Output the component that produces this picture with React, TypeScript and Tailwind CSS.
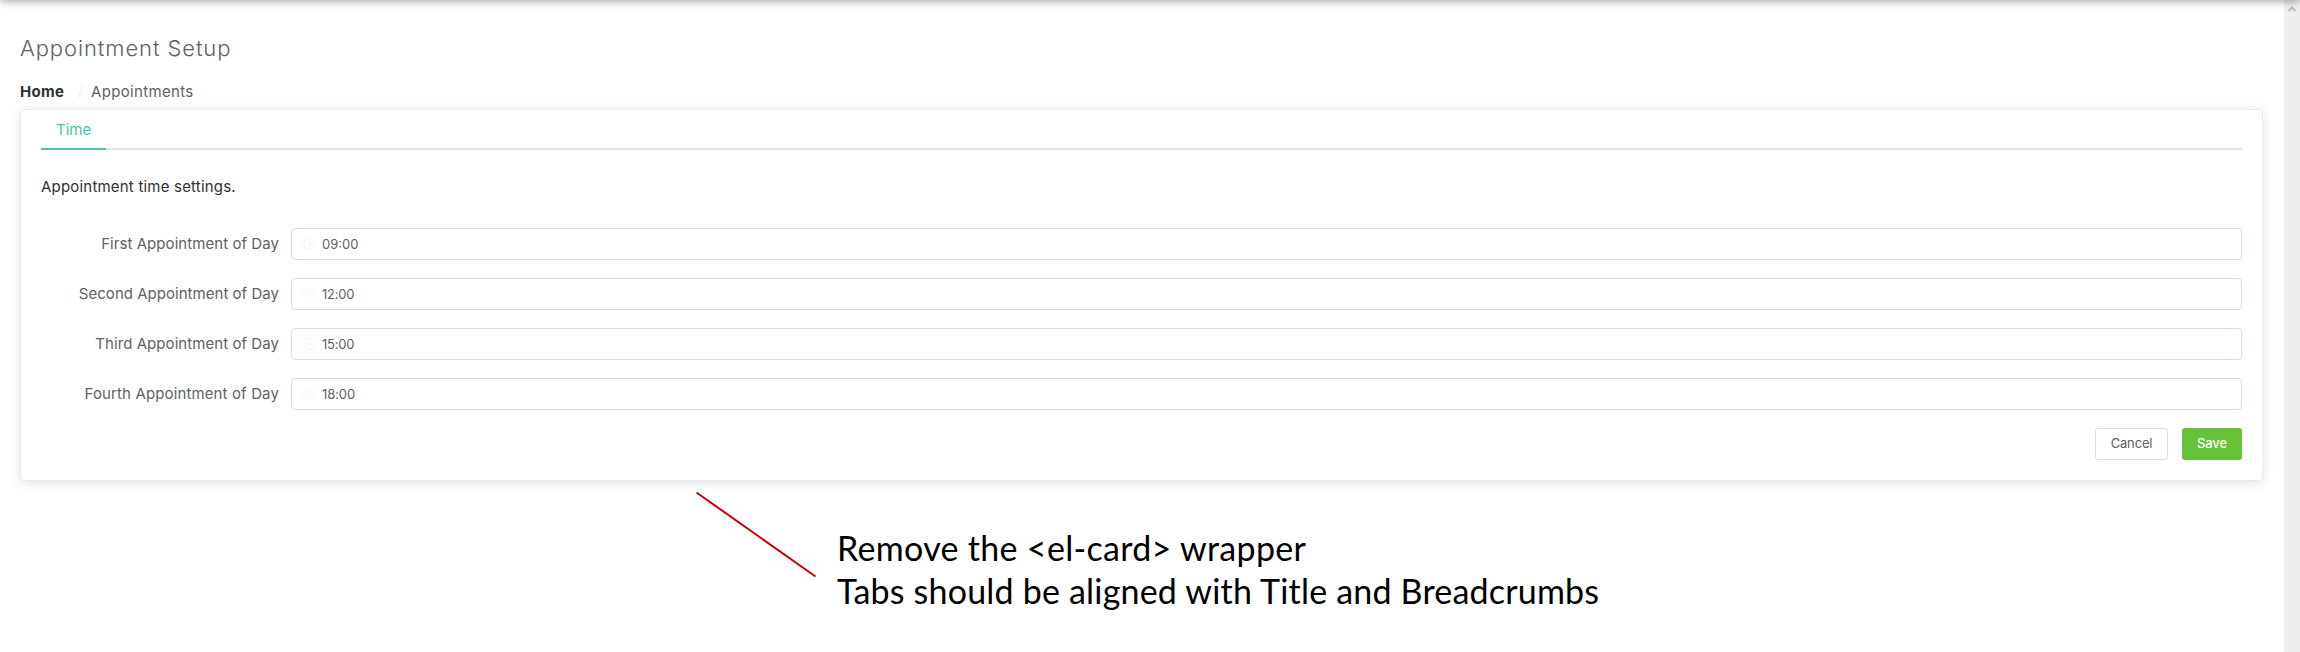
import { Fragment } from "react";

const fields = [
  { label: "First Appointment of Day", value: "09:00", track: "tracking-[0.06px]", valueTrack: "tracking-[0px]" },
  { label: "Second Appointment of Day", value: "12:00", track: "tracking-[0.03px]", valueTrack: "tracking-[-0.2px]" },
  { label: "Third Appointment of Day", value: "15:00", track: "tracking-[0.06px]", valueTrack: "tracking-[-0.2px]" },
  { label: "Fourth Appointment of Day", value: "18:00", track: "tracking-[0.13px]", valueTrack: "tracking-[-0.1px]" },
];

function ClockIcon() {
  return (
    <svg className="h-3 w-3 shrink-0" viewBox="0 0 12 12" fill="none" stroke="#eff3fb" strokeWidth="1">
      <circle cx="6" cy="6" r="5.3" />
      <path d="M6 2.8v3.7h3" />
    </svg>
  );
}

function Scrollbar() {
  return (
    <div className="flex w-4 shrink-0 justify-center bg-[#efefef] pt-[6px]">
      <svg className="mr-px h-[7px] w-[8px]" viewBox="0 0 8 7" fill="none" stroke="#bcbcbc" strokeWidth="2">
        <path d="M0.5 5L4 1.5L7.5 5" />
      </svg>
    </div>
  );
}

export default function App() {
  return (
    <div className="relative flex h-[652px] w-[2300px] overflow-hidden bg-white font-['Inter',sans-serif] text-[15px] text-[#606266]">
      <div className="pointer-events-none absolute inset-x-0 -top-2.5 h-2.5 shadow-[0_1px_8px_rgba(0,0,0,0.4)]" />

      <main className="flex-1 pl-5 pr-[21px] pt-8">
        <h1 className="h-8 text-[22px] font-light leading-8 tracking-[0.9px]">Appointment Setup</h1>

        <nav className="mt-[18px] flex h-5 items-center leading-5">
          <span className="w-[57px] font-bold tracking-[0.3px] text-[#303133]">Home</span>
          <svg className="h-3.5 w-[7px]" viewBox="0 0 7 14" stroke="#eff2f9" strokeWidth="1.5">
            <path d="M6 0L1 13.5" />
          </svg>
          <span className="ml-[7px] tracking-[0.33px]">Appointments</span>
        </nav>

        <section className="mt-[7px] h-[372px] rounded-[4px] border border-[#e6eaf5] bg-white px-5 shadow-[0_2px_12px_rgba(0,0,0,0.1)]">
          <div className="flex h-10 border-b-2 border-[#dfe3ec]">
            <div className="h-10 w-[65px] border-b-2 border-[#4fc0ab] pl-[15px] leading-10 text-[#52c1ad]">Time</div>
          </div>

          <p className="mt-[27px] h-5 leading-5 tracking-[0.2px] text-[#303133]">Appointment time settings.</p>

          <div className="mt-[31px] grid grid-cols-[238px_1fr] gap-x-3 gap-y-[18px]">
            {fields.map((f) => (
              <Fragment key={f.label}>
                <label className={"h-8 whitespace-nowrap text-right leading-[31px] " + f.track}>{f.label}</label>
                <div className="flex h-8 items-center rounded-[4px] border border-[#d8dce6] pl-[11px]">
                  <ClockIcon />
                  <span className={"ml-[7px] text-[13px] leading-[30px] " + f.valueTrack}>{f.value}</span>
                </div>
              </Fragment>
            ))}
          </div>

          <div className="mt-[18px] flex justify-end gap-[14px] text-[13px] tracking-[-0.15px]">
            <button className="h-8 w-[73px] rounded-[3px] border border-[#d8dce6] bg-white">Cancel</button>
            <button className="h-8 w-[60px] rounded-[3px] bg-[#67c23a] font-medium text-white">Save</button>
          </div>
        </section>
      </main>

      <Scrollbar />

      <svg className="absolute left-[690px] top-[486px] h-[96px] w-[132px]" viewBox="0 0 132 96" stroke="#cc0000" strokeWidth="2">
        <path d="M6.5 6.5L125.5 90.5" />
      </svg>
      <div className="absolute left-[837px] top-[526px] whitespace-nowrap font-['Lato',sans-serif] text-[34px] leading-[43px] text-black">
        <p className="tracking-[0.31px]">Remove the &lt;el-card&gt; wrapper</p>
        <p className="tracking-[0.2px]">Tabs should be aligned with Title and Breadcrumbs</p>
      </div>
    </div>
  );
}
